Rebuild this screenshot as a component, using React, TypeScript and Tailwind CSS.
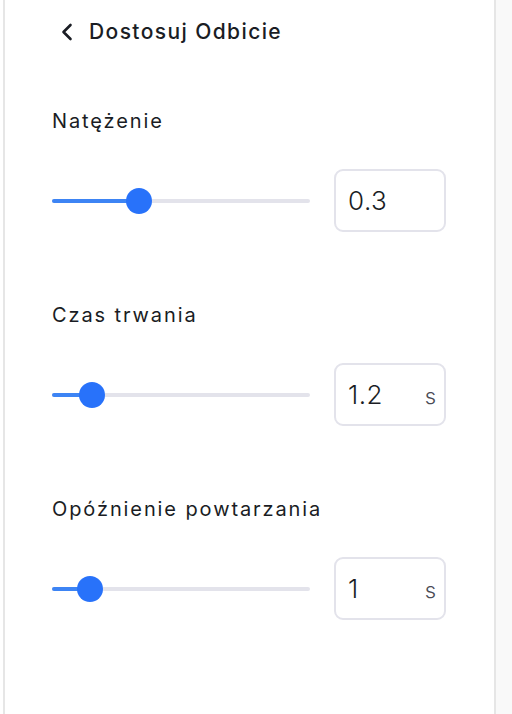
import { useState } from 'react'

type Setting = {
  label: string
  value: string
  unit?: string
  thumb: number // thumb centre, px from track start
}

const SETTINGS: Setting[] = [
  { label: 'Natężenie', value: '0.3', thumb: 87 },
  { label: 'Czas trwania', value: '1.2', unit: 's', thumb: 40 },
  { label: 'Opóźnienie powtarzania', value: '1', unit: 's', thumb: 38 },
]

function SliderRow({ setting }: { setting: Setting }) {
  const [value, setValue] = useState(setting.value)
  return (
    <div className="flex flex-col">
      <p className="text-[20px] leading-[28px] tracking-[1.9px] text-[#1a1d24]">{setting.label}</p>
      <div className="mt-[34px] flex items-center">
        <div className="relative h-[4px] w-[258px] rounded-full bg-[#e3e3eb]">
          <div
            className="absolute left-0 top-0 h-[4px] rounded-full bg-[#3d84f4]"
            style={{ width: setting.thumb }}
          />
          <div
            className="absolute top-1/2 h-[26px] w-[26px] -translate-x-1/2 -translate-y-1/2 rounded-full bg-[#2872fa]"
            style={{ left: setting.thumb }}
          />
        </div>
        <label className="ml-[24px] flex h-[63px] w-[112px] items-baseline rounded-[9px] border-2 border-[#e3e3eb] bg-white pl-[12px] pr-[8px] pt-[14px]">
          <input
            value={value}
            onChange={e => setValue(e.target.value)}
            className="w-0 min-w-0 flex-1 bg-transparent text-[26px] leading-[32px] font-light tracking-[0.5px] text-[#1a1d24] outline-none"
          />
          {setting.unit && (
            <span className="text-[22px] leading-[32px] font-light text-[#4a4b55]">{setting.unit}</span>
          )}
        </label>
      </div>
    </div>
  )
}

export default function App() {
  return (
    <div
      className="flex h-[714px] w-full bg-white"
      style={{ fontFamily: 'Inter, "Noto Sans", sans-serif' }}
    >
      <div className="w-[3px]" />
      <div className="flex flex-1 flex-col border-x-2 border-[#e6e6e6] bg-white pl-[47px]">
        <div className="mt-[18px] flex h-[28px] items-center">
          <svg width="14" height="18" viewBox="0 0 14 18" className="ml-[8px]">
            <path
              d="M10.5 2 L3.5 9 L10.5 16"
              fill="none"
              stroke="#1a1d24"
              strokeWidth="2.6"
              strokeLinecap="round"
              strokeLinejoin="round"
            />
          </svg>
          <span className="ml-[15px] text-[21px] font-medium tracking-[1.4px] text-[#1a1d24]">
            Dostosuj Odbicie
          </span>
        </div>
        <div className="mt-[61px] flex flex-col gap-[69px]">
          {SETTINGS.map(s => (
            <SliderRow key={s.label} setting={s} />
          ))}
        </div>
      </div>
      <div className="w-[16px] bg-[#f9f9f9]" />
    </div>
  )
}
